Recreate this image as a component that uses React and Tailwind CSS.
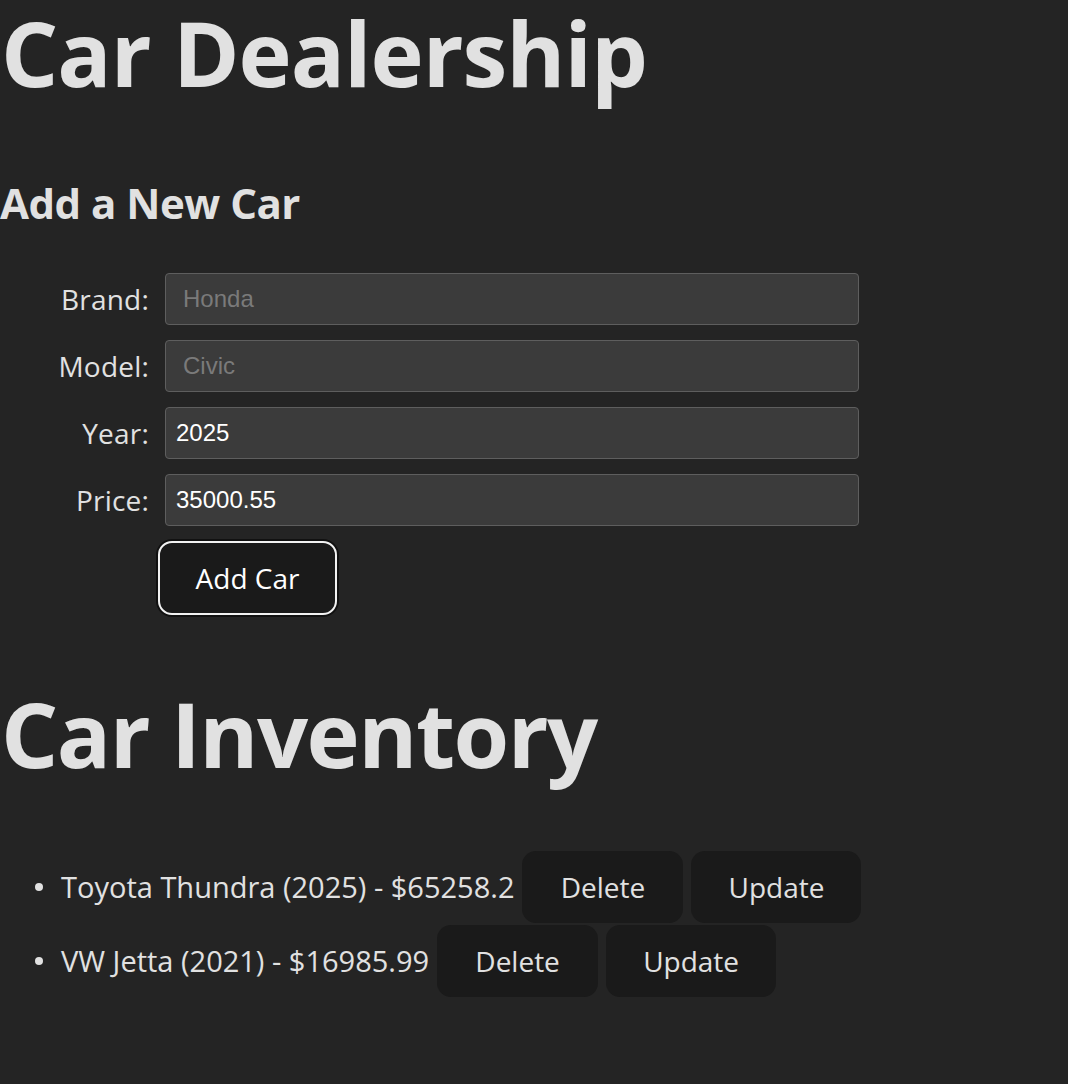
export default function App() {
  const fields = [
    { label: "Brand:", value: "", placeholder: "Honda" },
    { label: "Model:", value: "", placeholder: "Civic" },
    { label: "Year:", value: "2025", placeholder: "" },
    { label: "Price:", value: "35000.55", placeholder: "" },
  ];
  const cars = [
    "Toyota Thundra (2025) - $65258.2",
    "VW Jetta (2021) - $16985.99",
  ];
  return (
    <div className="min-h-[1084px] w-full bg-[#242424] text-[#e1e1e1] font-['Open_Sans',sans-serif] overflow-hidden">
      <h1 className="text-[90px] leading-[104px] font-bold tracking-[-1px] pl-[1px]">Car Dealership</h1>
      <h2 className="mt-[69px] text-[42px] leading-[60px] font-bold tracking-[-0.5px]">Add a New Car</h2>
      <div className="mt-[40px] flex flex-col gap-[15px]">
        {fields.map((f) => (
          <div key={f.label} className="flex items-center">
            <label className="w-[150px] pr-[1px] text-right text-[28px] tracking-[0.2px]">{f.label}</label>
            <input
              readOnly
              value={f.value}
              placeholder={f.placeholder}
              className={`ml-[15px] h-[52px] w-[694px] rounded-[4px] border border-[#5e5e5e] bg-[#3b3b3b] text-[24px] text-white placeholder:text-[#7a7a7a] font-['Liberation_Sans',Arial,sans-serif] outline-none ${f.value ? "pl-[10px]" : "pl-[17px]"}`}
            />
          </div>
        ))}
      </div>
      <button className="ml-[158px] mt-[15px] h-[74px] w-[179px] rounded-[14px] border-[2px] border-[#f2f2f2] bg-[#1a1a1a] text-[28px] font-medium text-white shadow-[0_0_0_2px_#111]">
        Add Car
      </button>
      <h1 className="mt-[66px] text-[90px] leading-[104px] font-bold tracking-[-1.5px] pl-[1px]">Car Inventory</h1>
      <ul className="mt-[66px] flex flex-col gap-[2px]">
        {cars.map((c) => (
          <li key={c} className="flex items-center h-[72px]">
            <span className="ml-[35px] mr-[18px] h-[8px] w-[8px] rounded-full bg-[#e1e1e1]" />
            <span className="text-[29px] tracking-[0px]">{c}</span>
            <button className="ml-[8px] h-[72px] w-[161px] rounded-[14px] bg-[#1a1a1a] text-[28px] font-medium">Delete</button>
            <button className="ml-[8px] h-[72px] w-[170px] rounded-[14px] bg-[#1a1a1a] text-[28px] font-medium">Update</button>
          </li>
        ))}
      </ul>
    </div>
  );
}
